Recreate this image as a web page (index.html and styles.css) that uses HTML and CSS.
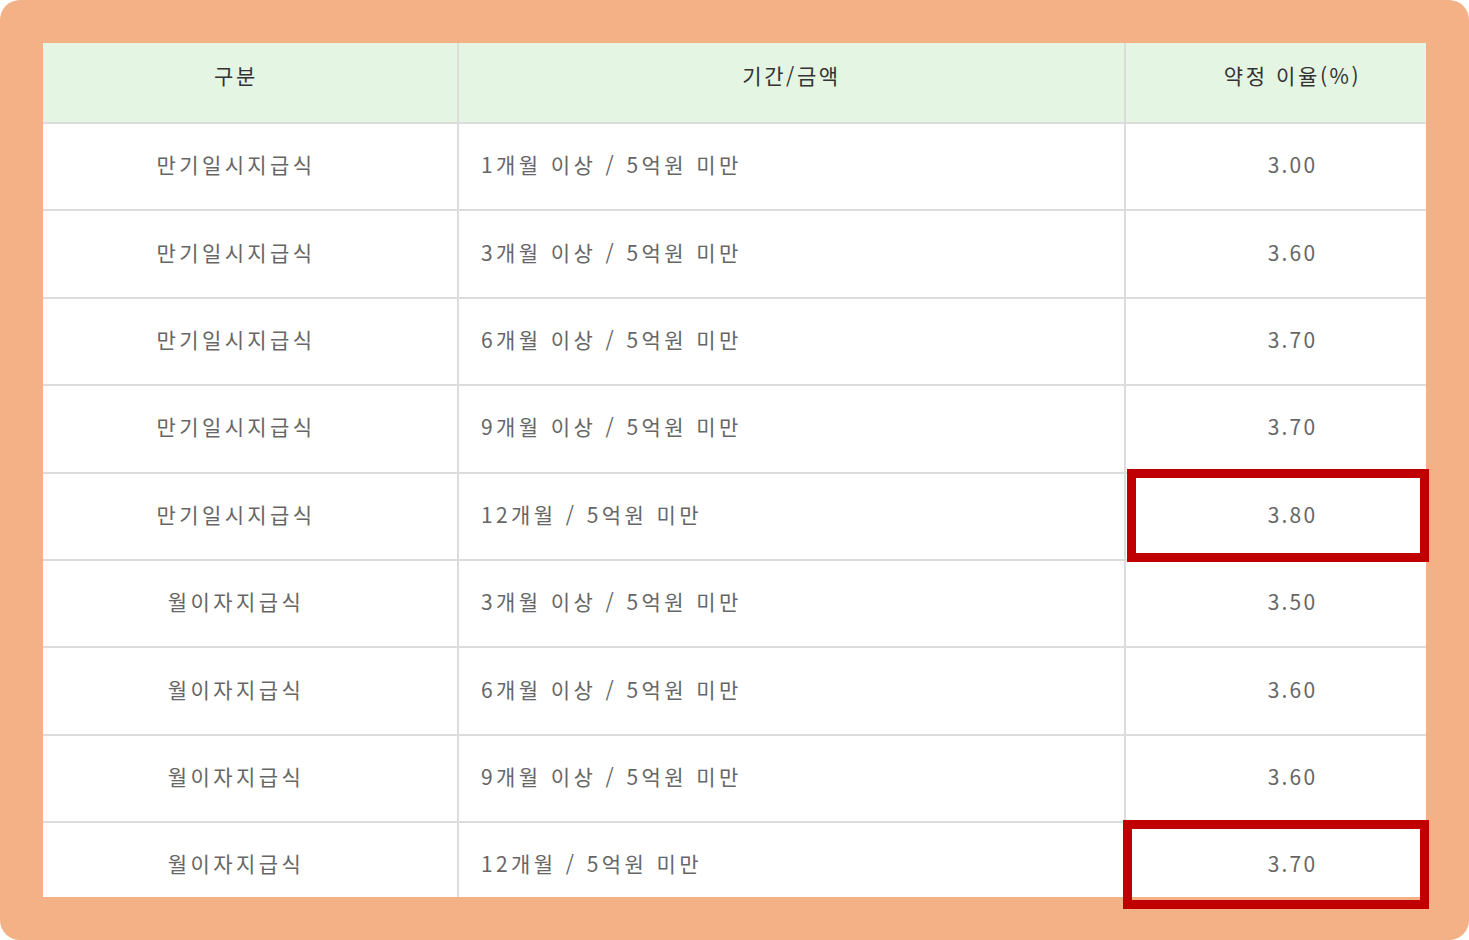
FILE: index.html
```html
<!DOCTYPE html>
<html lang="ko">
<head>
<meta charset="utf-8">
<link rel="stylesheet" href="styles.css">
</head>
<body>
<div class="frame">
  <div class="clip">
    <table class="rates">
      <colgroup><col class="c1"><col class="c2"><col class="c3"></colgroup>
      <thead>
        <tr><th>구분</th><th>기간/금액</th><th>약정 이율(%)</th></tr>
      </thead>
      <tbody>
        <tr><td class="kind">만기일시지급식</td><td class="term">1개월 이상 / 5억원 미만</td><td class="rate">3.00</td></tr>
        <tr><td class="kind">만기일시지급식</td><td class="term">3개월 이상 / 5억원 미만</td><td class="rate">3.60</td></tr>
        <tr><td class="kind">만기일시지급식</td><td class="term">6개월 이상 / 5억원 미만</td><td class="rate">3.70</td></tr>
        <tr><td class="kind">만기일시지급식</td><td class="term">9개월 이상 / 5억원 미만</td><td class="rate">3.70</td></tr>
        <tr><td class="kind">만기일시지급식</td><td class="term">12개월 / 5억원 미만</td><td class="rate">3.80</td></tr>
        <tr><td class="kind">월이자지급식</td><td class="term">3개월 이상 / 5억원 미만</td><td class="rate">3.50</td></tr>
        <tr><td class="kind">월이자지급식</td><td class="term">6개월 이상 / 5억원 미만</td><td class="rate">3.60</td></tr>
        <tr><td class="kind">월이자지급식</td><td class="term">9개월 이상 / 5억원 미만</td><td class="rate">3.60</td></tr>
        <tr><td class="kind">월이자지급식</td><td class="term">12개월 / 5억원 미만</td><td class="rate">3.70</td></tr>
      </tbody>
    </table>
  </div>
  <div class="mark mark-1"></div>
  <div class="mark mark-2"></div>
</div>
</body>
</html>
```

FILE: styles.css
```css
html, body {
  margin: 0;
  padding: 0;
  background: #ffffff;
}
.frame {
  position: relative;
  width: 1469px;
  height: 940px;
  box-sizing: border-box;
  padding: 43px;
  background: #f3b185;
  border-radius: 20px;
}
.clip {
  width: 1383px;
  height: 854px;
  overflow: hidden;
  background: #ffffff;
}
.rates {
  width: 1446px;
  margin-left: -30px;
  border-collapse: collapse;
  table-layout: fixed;
  font-family: "Noto Sans CJK KR", "Noto Sans", sans-serif;
  font-size: 21px;
  letter-spacing: 3.4px;
  word-spacing: 0;
  color: #666666;
}
.c1 { width: 444px; }
.c2 { width: 667px; }
.c3 { width: 335px; }
.rates th,
.rates td {
  border: 2px solid #dcdcdc;
  padding: 0;
  font-weight: normal;
}
.rates thead tr:first-child th { border-top: none; }
.rates th {
  height: 80px;
  box-sizing: border-box;
  padding-bottom: 15px;
  background: #e5f5e3;
  color: #333333;
  text-align: center;
  line-height: 1;
  letter-spacing: 2.6px;
}
.rates td {
  height: 85.4px;
  line-height: 1;
  box-sizing: content-box;
}
.rates tbody td {
  padding-bottom: 4px;
  height: 81.4px;
}
.kind { text-align: center; }
.term { text-align: left; padding-left: 22px !important; }
.rate { text-align: center; letter-spacing: 2.2px; }
.mark {
  position: absolute;
  border: 9px solid #c00000;
  box-sizing: border-box;
}
.mark-1 {
  left: 1127px;
  top: 469px;
  width: 302px;
  height: 93px;
}
.mark-2 {
  left: 1123px;
  top: 820px;
  width: 306px;
  height: 89px;
}
```
